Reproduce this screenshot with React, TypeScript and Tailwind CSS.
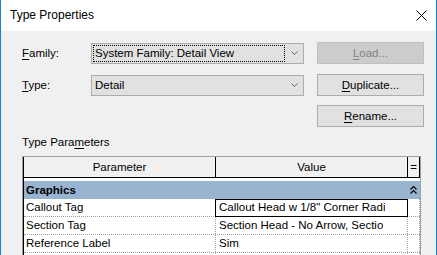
import React from "react";

function Chevron() {
  return (
    <svg width="7" height="4" viewBox="0 0 7 4" className="shrink-0">
      <path d="M0.5 0.5 L3.5 3.5 L6.5 0.5" fill="none" stroke="#606060" strokeWidth="1" />
    </svg>
  );
}

function DoubleUp() {
  return (
    <svg width="7" height="8" viewBox="0 0 7 8">
      <path d="M0.5 3.5 L3.5 0.5 L6.5 3.5 M0.5 7.5 L3.5 4.5 L6.5 7.5" fill="none" stroke="#000" strokeWidth="1.2" />
    </svg>
  );
}

function Btn({ children, disabled }: { children: React.ReactNode; disabled?: boolean }) {
  return (
    <div
      className={
        disabled
          ? "w-[107px] h-[22px] border border-[#bfbfbf] bg-[#cccccc] text-[#838383] flex items-center justify-center"
          : "w-[107px] h-[22px] border border-[#adadad] bg-[#e1e1e1] text-black flex items-center justify-center"
      }
    >
      {children}
    </div>
  );
}

export default function App() {
  return (
    <div className="w-[437px] h-[255px] overflow-hidden border-x border-[#1883d7] bg-[#f0f0f0] font-['Liberation_Sans',Arial,sans-serif] text-[11.5px] leading-[15px] text-black flex flex-col">
      <div className="h-[31px] shrink-0 bg-white flex items-center justify-between pl-[9px] pr-[9px] text-[12px]">
        <span>Type Properties</span>
        <svg width="11" height="11" viewBox="0 0 11 11">
          <path d="M0.5 0.5 L10.5 10.5 M10.5 0.5 L0.5 10.5" stroke="#000" strokeWidth="1" />
        </svg>
      </div>
      <div className="pl-[21px] pt-[11px] flex flex-col">
        <div className="flex items-center h-[22px]">
          <div className="w-[69px]">
            <u className="underline-offset-[2px]">F</u>amily:
          </div>
          <div className="w-[213px] h-[21px] border border-[#adadad] bg-[#e1e1e1] flex items-center pr-[5px]">
            <div className="ml-[1px] w-[192px] h-[17px] border border-dotted border-black flex items-center pl-[1px] whitespace-nowrap">
              System Family: Detail View
            </div>
            <div className="flex-1" />
            <Chevron />
          </div>
          <div className="ml-[13px]">
            <Btn disabled>
              <span>
                <u className="underline-offset-[2px]">L</u>oad...
              </span>
            </Btn>
          </div>
        </div>
        <div className="flex items-center h-[22px] mt-[10px]">
          <div className="w-[69px]">
            <u className="underline-offset-[2px]">T</u>ype:
          </div>
          <div className="w-[213px] h-[21px] border border-[#adadad] bg-[#e1e1e1] flex items-center pl-[3px] pr-[5px]">
            <span>Detail</span>
            <div className="flex-1" />
            <Chevron />
          </div>
          <div className="ml-[13px]">
            <Btn>
              <span>
                <u className="underline-offset-[2px]">D</u>uplicate...
              </span>
            </Btn>
          </div>
        </div>
        <div className="flex items-center h-[22px] mt-[9px] pl-[295px]">
          <Btn>
            <span>
              <u className="underline-offset-[2px]">R</u>ename...
            </span>
          </Btn>
        </div>
        <div className="mt-[8px] h-[15px]">
          Type Para<u className="underline-offset-[2px]">m</u>eters
        </div>
        <div className="mt-[6px] w-[399px] border-t border-x border-[#a0a0a0] flex flex-col bg-white">
          <div className="border-l border-black flex flex-col">
            <div className="flex h-[21px] bg-[#f0f0f0] border-b border-black">
              <div className="w-[192px] border-r border-black flex items-center justify-center">Parameter</div>
              <div className="w-[192px] border-r border-black flex items-center justify-center">Value</div>
              <div className="w-[12px] border-r border-black flex items-center justify-center">=</div>
            </div>
            <div className="h-[3px]" />
            <div className="h-[18px] bg-[#99b4d1] flex items-center">
              <div className="w-[192px] pl-[2px] font-bold">Graphics</div>
              <div className="w-[192px]" />
              <div className="w-[12px] flex items-center justify-center pr-[2px]">
                <DoubleUp />
              </div>
            </div>
            {[
              ["Callout Tag", "Callout Head w 1/8\" Corner Radi", true],
              ["Section Tag", "Section Head - No Arrow, Sectio", false],
              ["Reference Label", "Sim", false],
              ["", "", false],
            ].map(([p, v, sel], i) => (
              <div key={i} className="flex h-[18px] border-b border-dotted border-[#a0a0a0]">
                <div className="w-[192px] border-r border-dotted border-[#a0a0a0] pl-[2px] flex items-center">{p as string}</div>
                <div className="w-[192px] border-r border-dotted border-[#a0a0a0] pl-[3px] flex items-center relative">
                  {sel ? <div className="absolute -left-px -right-px top-0 -bottom-px border border-black" /> : null}
                  <span className="whitespace-nowrap overflow-hidden">{v as string}</span>
                </div>
                <div className="w-[12px] border-r border-dotted border-[#a0a0a0]" />
              </div>
            ))}
          </div>
        </div>
      </div>
    </div>
  );
}
